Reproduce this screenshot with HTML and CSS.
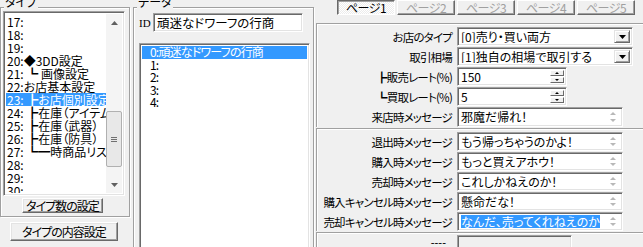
FILE: index.html
```html
<!DOCTYPE html>
<html lang="ja">
<head>
    <meta charset="UTF-8">
    <title>お店設定</title>
    <link rel="stylesheet" href="styles.css">
</head>
<body>
<div class="window">
    <!-- タイプ -->
    <div class="col-left">
        <div class="groupbox type-box">
            <span class="caption">タイプ</span>
            <div class="listbox type-list">
                <ul class="items">
                    <li>17:</li>
                    <li>18:</li>
                    <li>19:</li>
                    <li>20:◆3DD設定</li>
                    <li>21: ┗ 画像設定</li>
                    <li>22:お店基本設定</li>
                    <li class="selected">23: ┣お店個別設定</li>
                    <li>24: ┣在庫（アイテム）</li>
                    <li>25: ┣在庫（武器）</li>
                    <li>26: ┣在庫（防具）</li>
                    <li>27: ┗━時商品リスト</li>
                    <li>28:</li>
                    <li>29:</li>
                    <li>30:</li>
                </ul>
                <div class="vscroll">
                    <span class="sb-btn"><svg width="7" height="4" viewBox="0 0 7 4"><path d="M3.5 0 7 4H0z" fill="#606060"/></svg></span>
                    <div class="sb-track">
                        <span class="sb-thumb"><i></i><i></i><i></i></span>
                    </div>
                    <span class="sb-btn"><svg width="7" height="4" viewBox="0 0 7 4"><path d="M0 0h7L3.5 4z" fill="#606060"/></svg></span>
                </div>
            </div>
            <button class="btn btn-count">タイプ数の設定</button>
        </div>
        <button class="btn btn-content">タイプの内容設定</button>
    </div>

    <!-- データ -->
    <div class="groupbox data-box">
        <span class="caption">データ</span>
        <div class="id-row">
            <span class="id-label">ID</span>
            <div class="field id-field">頑迷なドワーフの行商</div>
        </div>
        <div class="listbox data-list">
            <ul class="items">
                <li class="selected">0:頑迷なドワーフの行商</li>
                <li>1:</li>
                <li>2:</li>
                <li>3:</li>
                <li>4:</li>
            </ul>
        </div>
    </div>

    <!-- ページ -->
    <div class="col-right">
        <div class="tabs">
            <button class="tab active">ページ1</button>
            <button class="tab">ページ2</button>
            <button class="tab">ページ3</button>
            <button class="tab">ページ4</button>
            <button class="tab">ページ5</button>
        </div>
        <div class="page">
            <div class="panel">
                <div class="row">
                    <span class="label">お店のタイプ</span>
                    <div class="field combo"><span class="val">[0]売り・買い両方</span><span class="drop"><svg width="7" height="4" viewBox="0 0 7 4"><path d="M0 0h7L3.5 4z" fill="#000"/></svg></span></div>
                </div>
                <div class="row">
                    <span class="label">取引相場</span>
                    <div class="field combo"><span class="val">[1]独自の相場で取引する</span><span class="drop"><svg width="7" height="4" viewBox="0 0 7 4"><path d="M0 0h7L3.5 4z" fill="#000"/></svg></span></div>
                </div>
                <div class="row">
                    <span class="label">┣販売レート(%)</span>
                    <div class="field spin"><span class="val">150</span><span class="spin-btns"><i class="up"></i><i class="down"></i></span></div>
                </div>
                <div class="row">
                    <span class="label">┗買取レート(%)</span>
                    <div class="field spin"><span class="val">5</span><span class="spin-btns"><i class="up"></i><i class="down"></i></span></div>
                </div>
                <div class="row tall">
                    <span class="label">来店時メッセージ</span>
                    <div class="field memo"><span class="val">邪魔だ帰れ！</span><span class="memo-sb"><i class="up"></i><i class="down"></i></span></div>
                </div>
            </div>
            <div class="panel">
                <div class="row">
                    <span class="label">退出時メッセージ</span>
                    <div class="field memo"><span class="val">もう帰っちゃうのかよ！</span><span class="memo-sb"><i class="up"></i><i class="down"></i></span></div>
                </div>
                <div class="row">
                    <span class="label">購入時メッセージ</span>
                    <div class="field memo"><span class="val">もっと買えアホウ！</span><span class="memo-sb"><i class="up"></i><i class="down"></i></span></div>
                </div>
                <div class="row">
                    <span class="label">売却時メッセージ</span>
                    <div class="field memo"><span class="val">これしかねえのか！</span><span class="memo-sb"><i class="up"></i><i class="down"></i></span></div>
                </div>
                <div class="row">
                    <span class="label">購入キャンセル時メッセージ</span>
                    <div class="field memo"><span class="val">懸命だな！</span><span class="memo-sb"><i class="up"></i><i class="down"></i></span></div>
                </div>
                <div class="row">
                    <span class="label">売却キャンセル時メッセージ</span>
                    <div class="field memo"><span class="val"><span class="hl">なんだ、売ってくれねえのか</span></span><span class="memo-sb"><i class="up"></i><i class="down"></i></span></div>
                </div>
            </div>
            <div class="panel">
                <div class="row last">
                    <span class="label dash">----</span>
                    <div class="field blank"></div>
                </div>
            </div>
        </div>
    </div>
</div>
</body>
</html>
```

FILE: styles.css
```css
* {
    box-sizing: border-box;
}
body {
    margin: 0;
    background-color: #f0f0f0;
    font-family: "Noto Sans CJK JP", sans-serif;
    font-size: 12px;
    font-feature-settings: "palt";
    color: #000;
    overflow: hidden;
}
ul {
    margin: 0;
    padding: 0;
    list-style: none;
}
.window {
    display: flex;
    width: 643px;
    height: 247px;
    overflow: hidden;
}

/* group boxes */
.groupbox {
    position: relative;
    border: 1px solid #a0a0a0;
    box-shadow: inset 1px 1px 0 #fff, 1px 1px 0 #fff;
}
.caption {
    position: absolute;
    top: -13px;
    left: 3px;
    padding: 0 1px;
    line-height: 14px;
    background: #f0f0f0;
}

/* sunken fields */
.field, .listbox {
    background: #fff;
    border: 1px solid;
    border-color: #a0a0a0 #fff #fff #a0a0a0;
    box-shadow: inset 1px 1px 0 #696969, inset -1px -1px 0 #e3e3e3;
}
.items li {
    height: 13px;
    line-height: 13px;
    white-space: nowrap;
}
.items li.selected {
    background: #3399ff;
    color: #fff;
}

/* buttons */
.btn {
    display: block;
    padding: 0;
    font: inherit;
    letter-spacing: -1px;
    white-space: nowrap;
    background: #f0f0f0;
    border: 1px solid;
    border-color: #fff #696969 #696969 #fff;
    box-shadow: inset -1px -1px 0 #a0a0a0, inset 1px 1px 0 #e3e3e3;
    line-height: 13px;
}

/* left column */
.col-left {
    width: 130px;
    padding-top: 7px;
    display: flex;
    flex-direction: column;
    flex: none;
}
.type-box {
    height: 210px;
    padding: 3px 2px 0 2px;
}
.type-list {
    display: flex;
    width: 122px;
    height: 185px;
    padding: 2px;
}
.type-list .items {
    flex: 1;
    overflow: hidden;
    padding-top: 1px;
}
.type-list .items li {
    padding-left: 1px;
}
.vscroll {
    width: 16px;
    display: flex;
    flex-direction: column;
    background: #f4f4f4;
}
.sb-btn {
    height: 17px;
    display: flex;
    align-items: center;
    justify-content: center;
}
.sb-track {
    flex: 1;
}
.sb-thumb {
    display: flex;
    flex-direction: column;
    align-items: center;
    justify-content: center;
    gap: 1px;
    margin-top: 80px;
    height: 56px;
    background: #e8e8e8;
    border: 1px solid #b0b0b0;
    border-radius: 2px;
}
.sb-thumb i {
    width: 6px;
    height: 1px;
    background: #707070;
}
.btn-count {
    width: 81px;
    height: 15px;
    margin: 2px 0 0 19px;
}
.btn-content {
    width: 108px;
    height: 19px;
    margin: 5px 0 0 10px;
    line-height: 17px;
}

/* data column */
.data-box {
    width: 181px;
    height: 260px;
    margin: 7px 0 0 3px;
    padding: 5px 0 0 5px;
    flex: none;
}
.id-row {
    display: flex;
    align-items: center;
}
.id-label {
    width: 14px;
    font-family: "Liberation Serif", serif;
    font-size: 11px;
}
.id-field {
    width: 150px;
    height: 19px;
    padding: 0 3px;
    line-height: 17px;
    font-size: 12.5px;
}
.data-list {
    width: 171px;
    height: 220px;
    margin-top: 11px;
    padding: 2px;
}
.data-list .items li {
    height: 12.5px;
    line-height: 12.5px;
    padding-left: 8px;
    letter-spacing: -0.8px;
}

/* right column */
.col-right {
    flex: 1;
    margin-left: 2px;
}
.tabs {
    display: flex;
    gap: 2px;
    margin-left: 21px;
    height: 23px;
}
.tab {
    width: 58px;
    height: 15px;
    padding: 0;
    font: inherit;
    letter-spacing: -0.5px;
    line-height: 13px;
    color: #a0a0a0;
    background: #f0f0f0;
    border: 1px solid;
    border-color: #fff #696969 #696969 #fff;
    box-shadow: inset -1px -1px 0 #a0a0a0;
}
.tab.active {
    color: #000;
    border-color: #696969 #fff #fff #696969;
    box-shadow: inset 1px 1px 0 #a0a0a0;
    background-color: #fafafa;
    background-image: repeating-conic-gradient(#fff 0 25%, #ececec 0 50%);
    background-size: 2px 2px;
}
.panel {
    border-top: 1px solid #a0a0a0;
    border-left: 1px solid #a0a0a0;
    box-shadow: inset 1px 1px 0 #fff;
    padding-top: 3px;
}
.row {
    display: flex;
    align-items: center;
    height: 19px;
    margin-bottom: 1px;
}
.row.tall {
    height: 20px;
}
.row.last {
    margin-top: -1px;
    align-items: flex-start;
}
.label {
    width: 135px;
    margin-right: 5px;
    text-align: right;
    white-space: nowrap;
    font-size: 11.5px;
    letter-spacing: -0.8px;
    flex: none;
}
.label.dash {
    padding-right: 6px;
    line-height: 14px;
    font-family: "Liberation Sans", sans-serif;
    letter-spacing: 0;
}
.row .field {
    display: flex;
    height: 100%;
    padding: 2px;
}
.val {
    flex: 1;
    padding-left: 1px;
    line-height: 14px;
    white-space: nowrap;
    overflow: hidden;
}
.hl {
    background: #3399ff;
    color: #fff;
}
.combo {
    width: 176px;
}
.drop {
    width: 16px;
    display: flex;
    align-items: center;
    justify-content: center;
    background: #f0f0f0;
    border: 1px solid;
    border-color: #e3e3e3 #696969 #696969 #e3e3e3;
    box-shadow: inset 1px 1px 0 #fff, inset -1px -1px 0 #a0a0a0;
}
.spin {
    width: 110px;
}
.spin-btns {
    width: 14px;
    display: flex;
    flex-direction: column;
    gap: 1px;
}
.spin-btns i {
    flex: 1;
    display: flex;
    align-items: center;
    justify-content: center;
    background: #f0f0f0;
    border: 1px solid;
    border-color: #fff #696969 #696969 #fff;
}
.spin-btns i::after, .memo-sb i::after {
    content: "";
    border-left: 2px solid transparent;
    border-right: 2px solid transparent;
}
.spin-btns i.up::after {
    border-bottom: 2px solid #000;
}
.spin-btns i.down::after {
    border-top: 2px solid #000;
}
.memo {
    width: 166px;
}
.memo-sb {
    width: 15px;
    display: flex;
    flex-direction: column;
    justify-content: space-between;
    padding: 2px 0;
}
.memo-sb i {
    display: flex;
    justify-content: center;
}
.memo-sb i.up::after {
    border-bottom: 3px solid #b8b8b8;
    border-left-width: 3px;
    border-right-width: 3px;
}
.memo-sb i.down::after {
    border-top: 3px solid #b8b8b8;
    border-left-width: 3px;
    border-right-width: 3px;
}
.blank {
    width: 115px;
    height: 30px;
    background: #f0f0f0;
}
```
